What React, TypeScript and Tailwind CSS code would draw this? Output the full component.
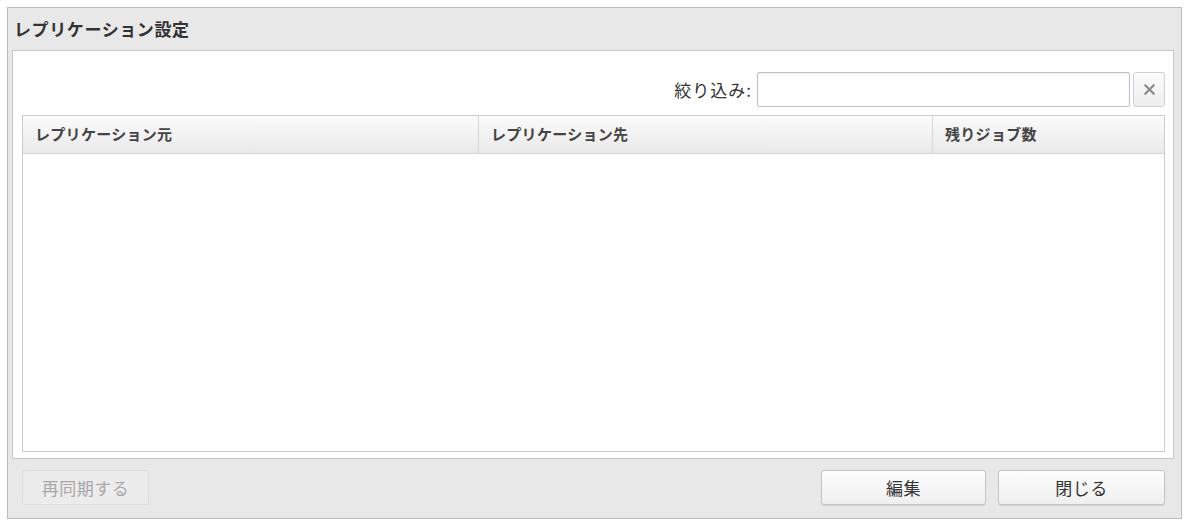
import { X } from "lucide-react";

const columns = [
  { label: "レプリケーション元", width: "w-[456px]" },
  { label: "レプリケーション先", width: "w-[454px]" },
  { label: "残りジョブ数", width: "flex-1" },
];

function DialogButton({
  label,
  width,
  disabled = false,
}: {
  label: string;
  width: string;
  disabled?: boolean;
}) {
  return (
    <button
      disabled={disabled}
      className={`${width} h-[35px] rounded-[3px] border text-[17px] tracking-[0.5px] ${
        disabled
          ? "border-[#dcdcdc] bg-[#ececec] text-[#a8a8a8]"
          : "border-[#c4c4c4] bg-gradient-to-b from-[#fdfdfd] to-[#efefef] text-[#333] shadow-[0_1px_1px_rgba(0,0,0,0.08)]"
      }`}
    >
      {label}
    </button>
  );
}

export default function App() {
  return (
    <div className="min-h-screen bg-white pl-[7px] pt-[7px] font-['Noto_Sans_CJK_JP','Noto_Sans',sans-serif]">
      <div className="flex h-[512px] w-[1175px] flex-col border border-[#bcbcbc] bg-[#e8e8e8]">
        {/* タイトル */}
        <div className="flex h-[42px] items-center pl-[6px] text-[17px] font-bold tracking-[0.6px] text-[#333]">
          レプリケーション設定
        </div>

        {/* 本体 */}
        <div className="ml-[4px] mr-[7px] flex h-[409px] flex-col border border-[#c6c6c6] bg-white pb-[6px] pl-[9px] pr-[8px] pt-[21px]">
          <div className="flex items-center justify-end">
            <span className="mr-[5px] text-[17px] tracking-[1px] text-[#333]">絞り込み:</span>
            <input
              type="text"
              className="h-[35px] w-[373px] rounded-[2px] border border-[#bfc0cf] bg-white px-2 shadow-[inset_0_1px_2px_rgba(0,0,0,0.08)] outline-none"
            />
            <button className="ml-[3px] flex h-[35px] w-[32px] items-center justify-center rounded-[3px] border border-[#d2d2d2] bg-gradient-to-b from-[#fbfbfb] to-[#eeeeee] text-[#888]">
              <X size={17} strokeWidth={3} />
            </button>
          </div>

          <div className="mt-[8px] flex flex-1 flex-col border border-[#cccccc]">
            <div className="flex h-[38px] border-b border-[#d4d4d4] bg-gradient-to-b from-[#fbfbfb] to-[#e9e9e9]">
              {columns.map((col, i) => (
                <div
                  key={col.label}
                  className={`${col.width} flex items-center pl-[12px] text-[15px] font-bold tracking-[0.3px] text-[#444] ${
                    i < columns.length - 1 ? "border-r border-[#d6d6d6]" : ""
                  }`}
                >
                  {col.label}
                </div>
              ))}
            </div>
            <div className="flex-1 bg-white" />
          </div>
        </div>

        {/* フッター */}
        <div className="flex flex-1 items-start pl-[14px] pr-[16px] pt-[11px]">
          <DialogButton label="再同期する" width="w-[127px]" disabled />
          <div className="flex-1" />
          <DialogButton label="編集" width="w-[165px]" />
          <div className="w-[12px]" />
          <DialogButton label="閉じる" width="w-[167px]" />
        </div>
      </div>
    </div>
  );
}
